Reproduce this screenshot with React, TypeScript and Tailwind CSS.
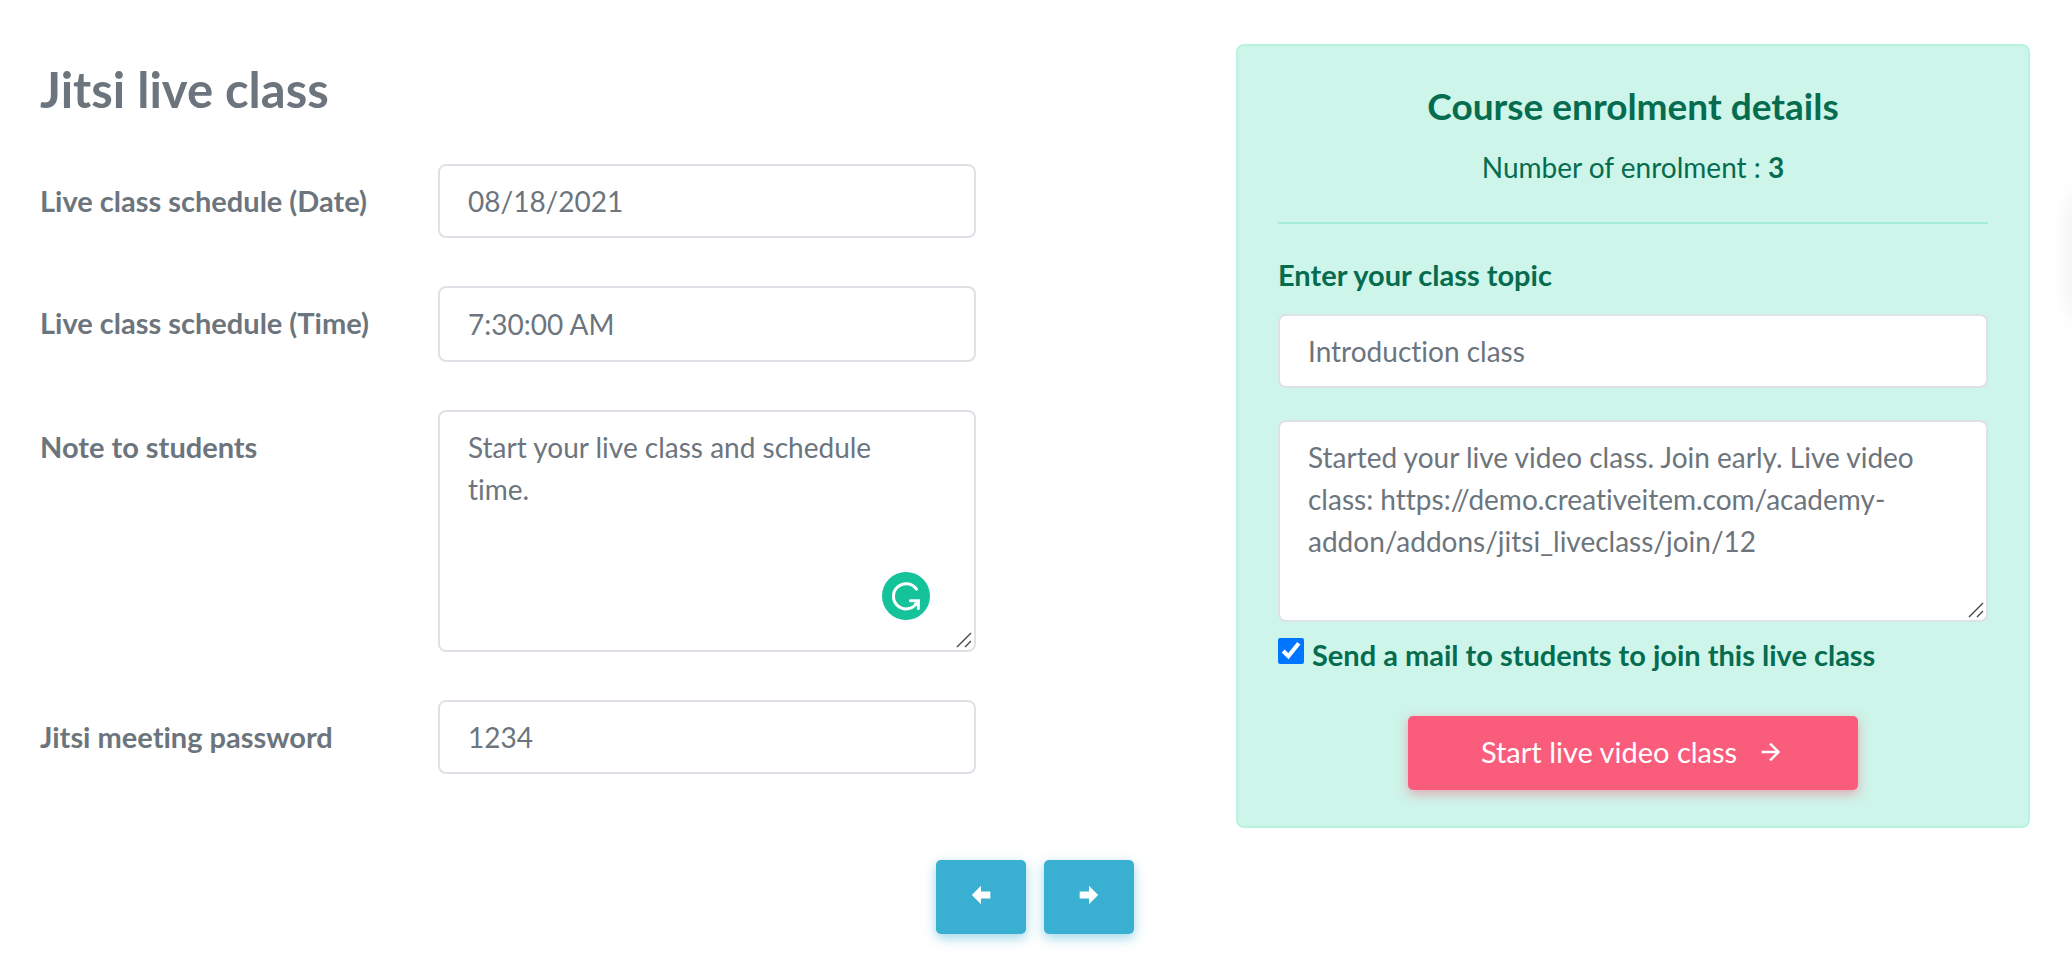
import type { ReactNode } from "react";

const inputClass =
  "block w-full rounded-lg border-2 border-[#dee2e6] bg-white pl-7 py-3.5 text-[28px] leading-[42px] text-[#6c757d] outline-none focus:border-[#c8cbcf]";

function ResizeGrip() {
  return (
    <svg
      viewBox="0 0 16 16"
      className="pointer-events-none absolute bottom-1 right-1 size-4"
      fill="none"
      stroke="#444"
      strokeWidth="1.4"
    >
      <path d="M1 15 15 1M9 15l6-6" />
    </svg>
  );
}

function GrammarlyBadge() {
  return (
    <svg
      viewBox="0 0 48 48"
      className="pointer-events-none absolute bottom-8 right-[46px] size-12"
      fill="none"
    >
      <circle cx="24" cy="24" r="24" fill="#15c39a" />
      <path
        d="M34.5 17.2A12.6 12.6 0 1 0 34.6 31.2"
        stroke="#fff"
        strokeWidth="3"
        strokeLinecap="round"
      />
      <path
        d="M28.4 28.8h8v7.6"
        stroke="#fff"
        strokeWidth="3"
        strokeLinecap="round"
      />
      <path d="M36 29.5 33 33" stroke="#fff" strokeWidth="3" />
    </svg>
  );
}

function Row({
  id,
  label,
  children,
}: {
  id: string;
  label: string;
  children: ReactNode;
}) {
  return (
    <div className="grid grid-cols-[398fr_538fr_260fr] items-start">
      <label
        htmlFor={id}
        className="py-4 text-[29px] font-bold leading-[42px]"
      >
        {label}
      </label>
      <div className="relative">{children}</div>
    </div>
  );
}

function NavButton({ label, path }: { label: string; path: string }) {
  return (
    <button
      type="button"
      aria-label={label}
      className="flex h-[74px] w-[90px] items-center justify-center rounded-[5px] bg-[#39afd1] text-white shadow-[0_4px_12px_rgba(57,175,209,0.5)] hover:bg-[#2b99b9]"
    >
      <svg viewBox="0 0 24 24" className="mb-1 size-7" fill="currentColor">
        <path d={path} />
      </svg>
    </button>
  );
}

export default function App() {
  return (
    <div className="relative min-h-screen overflow-hidden bg-white pb-9 pl-10 pr-[42px] pt-11 font-['Lato',sans-serif] text-[28px] text-[#6c757d] [font-variant-ligatures:none]">
      <form onSubmit={(e) => e.preventDefault()}>
        <div className="grid grid-cols-[1196fr_794fr] items-start">
          <div className="pt-[18px]">
            <h1 className="mb-12 text-[49px] font-bold leading-[54px]">
              Jitsi live class
            </h1>
            <div className="flex flex-col gap-12">
              <Row id="date" label="Live class schedule (Date)">
                <input
                  id="date"
                  type="text"
                  defaultValue="08/18/2021"
                  className={`${inputClass} pr-7`}
                />
              </Row>
              <Row id="time" label="Live class schedule (Time)">
                <input
                  id="time"
                  type="text"
                  defaultValue="7:30:00 AM"
                  className={`${inputClass} h-[76px] pr-7`}
                />
              </Row>
              <Row id="note" label="Note to students">
                <textarea
                  id="note"
                  rows={5}
                  defaultValue="Start your live class and schedule time."
                  className={`${inputClass} resize-none pr-16`}
                />
                <GrammarlyBadge />
                <ResizeGrip />
              </Row>
              <Row id="password" label="Jitsi meeting password">
                <input
                  id="password"
                  type="text"
                  defaultValue="1234"
                  className={`${inputClass} pr-7`}
                />
              </Row>
            </div>
          </div>

          <div className="rounded-lg border-2 border-[#baf2e2] bg-[#cef5ea] px-10 pb-9 pt-[38px] text-[#056c4f]">
            <h2 className="text-center text-[37px] font-bold leading-[44px]">
              Course enrolment details
            </h2>
            <p className="mt-[18px] text-center leading-[42px]">
              Number of enrolment : <strong>3</strong>
            </p>
            <hr className="mb-[30px] mt-[34px] border-t-2 border-[#a4eed8]" />
            <label
              htmlFor="topic"
              className="block text-[29px] font-bold leading-[42px]"
            >
              Enter your class topic
            </label>
            <input
              id="topic"
              type="text"
              defaultValue="Introduction class"
              className={`${inputClass} mt-[18px] pr-7`}
            />
            <div className="relative mt-8">
              <textarea
                aria-label="Mail message"
                rows={4}
                defaultValue="Started your live video class. Join early. Live video class: https://demo.creativeitem.com/academy-addon/addons/jitsi_liveclass/join/12"
                className={`${inputClass} h-[202px] resize-none pr-7`}
              />
              <ResizeGrip />
            </div>
            <div className="mt-3 flex items-start gap-2">
              <input
                id="mail"
                type="checkbox"
                defaultChecked
                className="mt-1 size-[26px] accent-[#0075ff]"
              />
              <label
                htmlFor="mail"
                className="text-[29px] font-bold leading-[42px]"
              >
                Send a mail to students to join this live class
              </label>
            </div>
            <button
              type="submit"
              className="mx-auto mt-10 flex h-[74px] w-[450px] max-w-full items-center justify-center gap-5 rounded-[5px] bg-[#fa5c7c] pb-0.5 text-[29px] text-white shadow-[0_4px_12px_rgba(250,92,124,0.5)] hover:bg-[#f9375e]"
            >
              Start live video class
              <svg viewBox="0 0 24 24" className="size-7" fill="currentColor">
                <path d="M4 11v2h12l-5.5 5.5 1.42 1.42L19.84 12l-7.92-7.92L10.5 5.5 16 11H4z" />
              </svg>
            </button>
          </div>
        </div>

        <div className="mt-8 flex justify-center gap-[18px]">
          <NavButton
            label="Previous"
            path="M20 9v6h-8v4.84L4.16 12 12 4.16V9h8z"
          />
          <NavButton
            label="Next"
            path="M4 15V9h8V4.16L19.84 12 12 19.84V15H4z"
          />
        </div>
      </form>

      {/* settings tab parked past the right edge, only its shadow shows */}
      <div className="absolute left-full top-[196px] h-[120px] w-20 rounded-lg bg-white shadow-[0_0_24px_rgba(0,0,0,0.08)]" />
    </div>
  );
}
